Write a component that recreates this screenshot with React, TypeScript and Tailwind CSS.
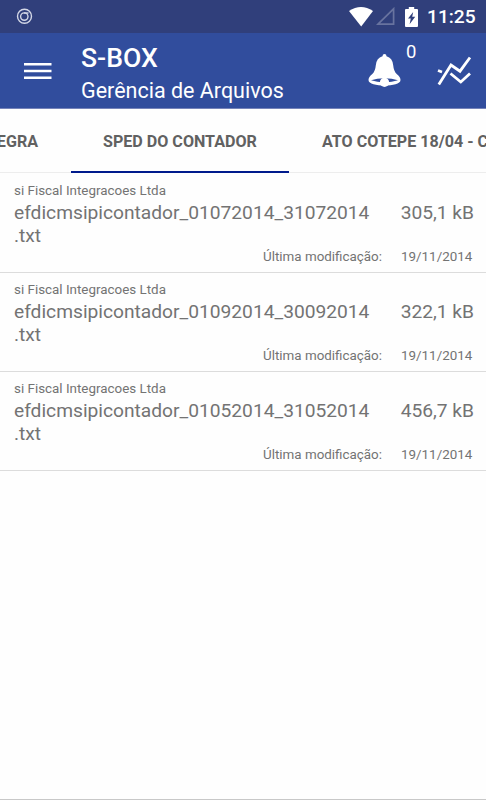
const arquivos = [
  { nome: "efdicmsipicontador_01072014_31072014", extensao: ".txt", tamanho: "305,1 kB" },
  { nome: "efdicmsipicontador_01092014_30092014", extensao: ".txt", tamanho: "322,1 kB" },
  { nome: "efdicmsipicontador_01052014_31052014", extensao: ".txt", tamanho: "456,7 kB" },
];

function BarraStatus() {
  return (
    <div className="flex h-[33px] flex-shrink-0 items-center bg-[#303f7b] pl-4 pr-[10px] text-white">
      <svg width="17" height="17" viewBox="0 0 17 17" fill="none" stroke="#d3d7e6" strokeWidth="1.4">
        <circle cx="8.5" cy="8.3" r="7" />
        <circle cx="8.3" cy="8.6" r="3.7" />
        <path d="M8 5h4.5" />
      </svg>
      <div className="flex-1" />
      <svg width="24" height="20" viewBox="0 0 24 20" fill="currentColor">
        <path d="M0 4Q12-4 24 4L12.2 19.6z" />
      </svg>
      <svg className="ml-[3px]" width="19" height="19" viewBox="0 0 19 19" fill="none" stroke="#68739f" strokeWidth="1.7">
        <path d="M2 17.2 17.6 1.8v15.4z" />
      </svg>
      <svg className="ml-[10px]" width="13" height="20" viewBox="0 0 13 20">
        <path d="M3.8 0h5.4v2H12q1 0 1 1v16q0 1-1 1H1q-1 0-1-1V3q0-1 1-1h2.8z" fill="#fff" />
        <path d="M8.2 5 3 11.6h2.8L4.6 17.2 10.2 9.8H7.2z" fill="#303f7b" />
      </svg>
      <span className="ml-[9px] mt-px w-[49px] whitespace-nowrap text-[19.2px] font-medium leading-none">11:25</span>
    </div>
  );
}

function Cabecalho() {
  return (
    <header className="flex h-[76px] flex-shrink-0 items-start border-b border-[#7583b9] bg-[#314d9d] text-white">
      <button type="button" aria-label="Menu" className="ml-6 mt-[30px]">
        <svg width="28" height="17" viewBox="0 0 28 17" fill="currentColor">
          <path d="M0 0h27.5v2.6H0zM0 6.7h27.5v2.6H0zM0 13.5h27.5v2.6H0z" />
        </svg>
      </button>
      <div className="ml-[29px] mt-[9px] flex-1 whitespace-nowrap">
        <h1 className="text-[26.6px] font-medium leading-8">S-BOX</h1>
        <p className="mt-px text-[21.5px] leading-8">Gerência de Arquivos</p>
      </div>
      <button type="button" aria-label="Alertas" className="mt-[21px]">
        <svg width="34" height="34" viewBox="0 0 34 34">
          <path
            d="M16.5 0q2 0 2 2.3 6 1.7 6.7 9 .5 6 3.5 8.7Q32.5 23 32.500 26C32.5 30 24.5 31.5 16.5 31.5S.5 30 .5 26Q.5 23 4.300 20 7.3 17.3 7.8 11.3 8.5 4 14.5 2.3 14.5 0 16.500 0z"
            fill="#fff"
          />
          <path d="M3 26.3Q9 24.2 16.5 24.2T30 26.3Q24 28.4 16.5 28.4T3 26.3z" fill="#314d9d" />
          <circle cx="16.5" cy="28.3" r="4.6" fill="#fff" />
        </svg>
      </button>
      <span className="ml-1 mt-[9px] w-[11px] text-[18.5px] leading-5">0</span>
      <button type="button" aria-label="Gráficos" className="ml-5 mr-3.5 mt-[23px]">
        <svg width="35" height="30" viewBox="0 0 35 30" fill="none" stroke="currentColor" strokeWidth="2.8">
          <path d="M1.8 28.5 14 9l9 6.2L33 1.5" />
          <path d="m13.5 17.5 10.3 8.5L33 17.5" />
          <path d="M1 14.5 5 16" />
        </svg>
      </button>
    </header>
  );
}

function Abas() {
  return (
    <nav className="flex h-16 flex-shrink-0 overflow-hidden whitespace-nowrap text-[16.1px] font-bold leading-[66px] text-[#616161]">
      <div className="flex h-16 w-[71px] flex-shrink-0 justify-end border-b border-[#ededed] pr-[33px]">ÍNTEGRA</div>
      <div className="h-16 w-[218px] flex-shrink-0 border-b-2 border-[#001a8c] pl-8">SPED DO CONTADOR</div>
      <div className="h-16 border-b border-[#ededed] pl-[33px]">ATO COTEPE 18/04 - COMPLETO</div>
    </nav>
  );
}

type Arquivo = (typeof arquivos)[number];

function LinhaArquivo({ nome, extensao, tamanho }: Arquivo) {
  return (
    <li className="h-[99px] border-b border-[#dcdcdc] pl-3.5 pr-3 pt-[9px] text-[#737373]">
      <p className="text-[13.4px] leading-4">si Fiscal Integracoes Ltda</p>
      <div className="mt-[3px] flex justify-between text-[19.2px] leading-[22.5px]">
        <p className="whitespace-nowrap">
          {nome}
          <br />
          {extensao}
        </p>
        <p className="whitespace-nowrap">{tamanho}</p>
      </div>
      <div className="mt-0.5 flex justify-end gap-[19px] text-[13.4px] leading-4">
        <span>Última modificação:</span>
        <span className="w-[73px] whitespace-nowrap">19/11/2014</span>
      </div>
    </li>
  );
}

export default function App() {
  return (
    <div className="flex h-[800px] w-[486px] flex-col overflow-hidden border-b border-[#c8c8c8] bg-[#fefefe] font-['Roboto',sans-serif]">
      <BarraStatus />
      <Cabecalho />
      <Abas />
      <ul className="flex-1 pt-px">
        {arquivos.map((a) => (
          <LinhaArquivo key={a.nome} {...a} />
        ))}
      </ul>
    </div>
  );
}
